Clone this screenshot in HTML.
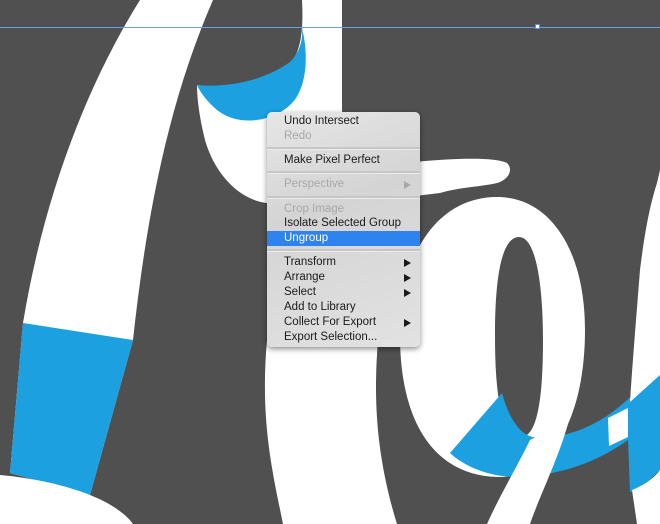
<!DOCTYPE html>
<html><head><meta charset="utf-8"><style>
html,body{margin:0;padding:0;}
body{width:660px;height:524px;overflow:hidden;background:#505050;position:relative;font-family:"Liberation Sans",sans-serif;}
svg{position:absolute;left:0;top:0;}
.menu{position:absolute;left:267px;top:112px;width:153px;height:235px;border-radius:5px;background:linear-gradient(160deg,#e6e6e6 0%,#d4d4d4 40%,#e2e2e2 100%);box-shadow:0 2px 6px rgba(0,0,0,.45);}
.it{position:absolute;left:0;width:153px;height:15px;line-height:15px;font-size:11.5px;color:#1a1a1a;padding-left:17px;box-sizing:border-box;}
.dis{color:#a8a8a8;}
.sel{background:#2f83ee;color:#fff;}
.ar{position:absolute;right:9px;top:4px;width:0;height:0;border-left:7px solid #1a1a1a;border-top:4px solid transparent;border-bottom:4px solid transparent;}
.dis .ar{border-left-color:#aaa;}
.sep{position:absolute;left:0;width:153px;height:2px;background:#c6c6c6;border-bottom:1px solid #ececec;}
</style></head><body>
<svg width="660" height="524" viewBox="0 0 660 524">
<!-- left big stroke -->
<path d="M140,0 C90,80 45,190 23,323 L10,473 L90,495 L133,340 C145,230 165,110 213,0 Z" fill="#fff"/>
<path d="M23,323 L133,340 L90,495 L10,473 Z" fill="#1ca0e0"/>
<path d="M0,475 C33,478 65,485 90,495 C110,503 125,513 133,524 L0,524 Z" fill="#fff"/>
<!-- top hook -->
<path d="M302,0 L342,0 L342,112 L267,112 L267,203 C240,200 215,175 205,140 C200,120 197,100 197,85 C230,90 270,82 293,60 C303,45 303,20 302,0 Z" fill="#fff"/>
<path d="M197,85 C230,88 265,80 290,62 C300,52 303,40 302,28 C310,60 305,92 290,105 C272,122 238,127 217,110 C208,102 201,94 197,85 Z" fill="#1ca0e0"/>
<!-- swash -->
<path d="M415,162 C455,158 495,157 507,163 C514,170 508,180 497,183 C480,187 460,187 440,193 L415,196 Z" fill="#fff"/>
<!-- left stroke below menu -->
<path d="M267,340 L378,340 C374,390 374,450 397,524 L283,524 C272,470 260,420 267,340 Z" fill="#fff"/>
<!-- o ring -->
<path fill-rule="evenodd" fill="#fff" d="M497,197 C550,197 585,250 585,330 C585,420 550,477 500,477 C440,477 400,430 400,335 C400,250 440,197 497,197 Z M519,237 C537,237 543,290 543,340 C543,400 537,437 521,437 C500,437 495,390 495,335 C495,280 501,237 519,237 Z"/>
<!-- blue band -->
<path d="M450,453 L502,393 C510,422 522,438 540,438 C570,437 600,425 627,400 L660,370 L660,470 C648,482 638,490 630,492 L628,440 C600,460 565,475 517,477 C490,477 465,467 450,453 Z" fill="#1ca0e0"/>
<!-- descender -->
<path d="M530,440 L569,420 C560,455 540,495 530,524 L487,524 C500,495 518,465 530,440 Z" fill="#fff"/>
<!-- small white strip -->
<path d="M608,418 L628,408 L628,437 L609,446 Z" fill="#fff"/>
<!-- right tall white -->
<path d="M660,170 L657,183 C650,205 645,230 640,270 C636,320 632,370 630,402 L660,375 Z" fill="#fff"/>
<path d="M632,490 C645,485 655,477 660,470 L660,524 L637,524 Z" fill="#fff"/>
<!-- guide -->
<line x1="0" y1="27.5" x2="660" y2="27.5" stroke="#6a9cf0" stroke-width="1"/>
<rect x="535.5" y="24.5" width="4" height="4" fill="#fff" stroke="#5b8fe6" stroke-width="1"/>
</svg>
<div class="menu">
<div class="it" style="top:2px">Undo Intersect</div>
<div class="it dis" style="top:17px">Redo</div>
<div class="sep" style="top:35px"></div>
<div class="it" style="top:41px">Make Pixel Perfect</div>
<div class="sep" style="top:59px"></div>
<div class="it dis" style="top:65px">Perspective<span class="ar"></span></div>
<div class="sep" style="top:84px"></div>
<div class="it dis" style="top:90px">Crop Image</div>
<div class="it" style="top:104px">Isolate Selected Group</div>
<div class="it sel" style="top:119px">Ungroup</div>
<div class="sep" style="top:137px"></div>
<div class="it" style="top:143px">Transform<span class="ar"></span></div>
<div class="it" style="top:158px">Arrange<span class="ar"></span></div>
<div class="it" style="top:173px">Select<span class="ar"></span></div>
<div class="it" style="top:188px">Add to Library</div>
<div class="it" style="top:203px">Collect For Export<span class="ar"></span></div>
<div class="it" style="top:218px">Export Selection...</div>
</div>
</body></html>
